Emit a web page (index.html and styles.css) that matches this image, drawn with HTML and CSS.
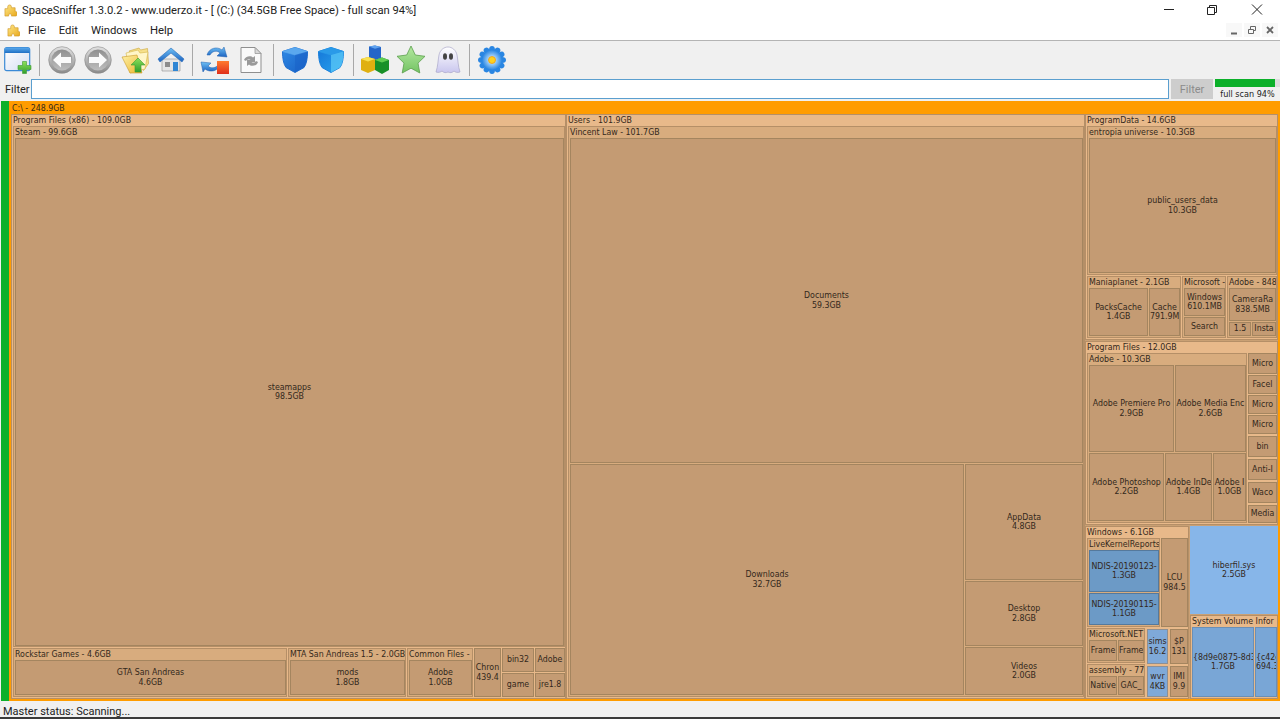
FILE: index.html
```html
<!DOCTYPE html>
<html lang="en">
<head>
  <meta charset="UTF-8">
  <title>SpaceSniffer</title>
  <link rel="stylesheet" href="styles.css">
</head>
<body>
  <svg class="defs" width="0" height="0">
    <defs>
      <linearGradient id="g-puzzle" x1="0" y1="0" x2="1" y2="1"><stop offset="0" stop-color="#ffe98a"/><stop offset="1" stop-color="#e8a81c"/></linearGradient>
      <linearGradient id="g-gray" x1="0" y1="0" x2="0" y2="1"><stop offset="0" stop-color="#e2e2e2"/><stop offset="1" stop-color="#8a8a8a"/></linearGradient>
      <linearGradient id="g-disc" x1="0" y1="0" x2="0" y2="1"><stop offset="0" stop-color="#8f8f8f"/><stop offset="1" stop-color="#bdbdbd"/></linearGradient>
      <linearGradient id="g-band" x1="0" y1="0" x2="0" y2="1"><stop offset="0" stop-color="#5aa9ec"/><stop offset="1" stop-color="#1f6fc4"/></linearGradient>
      <linearGradient id="g-page" x1="0" y1="0" x2="1" y2="1"><stop offset="0" stop-color="#ffffff"/><stop offset="1" stop-color="#d5def2"/></linearGradient>
      <linearGradient id="g-green" x1="0" y1="0" x2="0" y2="1"><stop offset="0" stop-color="#8fe05a"/><stop offset="1" stop-color="#2f9e2c"/></linearGradient>
      <linearGradient id="g-folder" x1="0" y1="0" x2="1" y2="1"><stop offset="0" stop-color="#fff2a8"/><stop offset="1" stop-color="#eab42a"/></linearGradient>
      <linearGradient id="g-blue" x1="0" y1="0" x2="0" y2="1"><stop offset="0" stop-color="#6fc0f5"/><stop offset="1" stop-color="#1b62c0"/></linearGradient>
      <linearGradient id="g-red" x1="0" y1="0" x2="0" y2="1"><stop offset="0" stop-color="#ff7a30"/><stop offset="1" stop-color="#e0301c"/></linearGradient>
      <linearGradient id="g-star" x1="0" y1="0" x2="0" y2="1"><stop offset="0" stop-color="#b4e8a0"/><stop offset="1" stop-color="#74c464"/></linearGradient>
      <linearGradient id="g-ghost" x1="0" y1="0" x2="0" y2="1"><stop offset="0" stop-color="#ffffff"/><stop offset="1" stop-color="#c9c6ee"/></linearGradient>
      <linearGradient id="g-cube-a" x1="0" y1="0" x2="1" y2="1"><stop offset="0" stop-color="#2f8ae6"/><stop offset="1" stop-color="#1860c4"/></linearGradient>
      <linearGradient id="g-cube-b" x1="0" y1="0" x2="1" y2="1"><stop offset="0" stop-color="#1576d8"/><stop offset="1" stop-color="#2aa4ee"/></linearGradient>
      <radialGradient id="g-petal"><stop offset=".35" stop-color="#a8d4fa"/><stop offset="1" stop-color="#2a86e2"/></radialGradient>
    </defs>
  </svg>

  <div class="titlebar">
    <svg class="app-icon" viewBox="0 0 14 14"><path d="M1 5h3V3q0-2 2-2t2 2v1h4v4h1q1 0 1 2.500T13 13H8v-1q0-1.500-1.500-1.500T5 12v1H1z" fill="url(#g-puzzle)" stroke="#c98f1c" stroke-width=".6"/></svg>
    <span class="title">SpaceSniffer 1.3.0.2 - www.uderzo.it - [ (C:) (34.5GB Free Space) - full scan 94%]</span>
    <div class="winbtns">
      <svg viewBox="0 0 46 20"><path d="M18 9.500h10" stroke="#222" fill="none"/></svg>
      <svg viewBox="0 0 46 20"><path d="M17.500 7.500h7v7h-7zM19.500 7.500v-2h7v7h-2" stroke="#222" fill="none"/></svg>
      <svg viewBox="0 0 46 20"><path d="M18 4.500l10 10M28 4.500l-10 10" stroke="#222" fill="none"/></svg>
    </div>
  </div>

  <div class="menubar">
    <svg class="app-icon" viewBox="0 0 14 14"><path d="M1 5h3V3q0-2 2-2t2 2v1h4v4h1q1 0 1 2.500T13 13H8v-1q0-1.500-1.500-1.500T5 12v1H1z" fill="url(#g-puzzle)" stroke="#c98f1c" stroke-width=".6"/></svg>
    <span class="menu">File</span>
    <span class="menu">Edit</span>
    <span class="menu">Windows</span>
    <span class="menu">Help</span>
    <div class="mdibtns">
      <svg viewBox="0 0 16 14"><path d="M5 10.500h6" stroke="#666" stroke-width="2" fill="none"/></svg>
      <svg viewBox="0 0 16 14"><path d="M4.500 6.500h5v4h-5zM6.500 6V3.500h5v4H10" stroke="#666" fill="none"/></svg>
      <svg viewBox="0 0 16 14"><path d="M5 4l6 6M11 4l-6 6" stroke="#666" stroke-width="1.800" fill="none"/></svg>
    </div>
  </div>

  <div class="toolbar">
    <svg class="tool" viewBox="0 0 28 28">
      <rect x=".7" y="1.700" width="25" height="23" rx="2" fill="url(#g-page)" stroke="#3b8ad6" stroke-width="1.200"/>
      <path d="M.7 3.700a2 2 0 0 1 2-2h21a2 2 0 0 1 2 2v3.300h-25z" fill="url(#g-band)"/>
      <path d="M18.500 15.500h4v4h4.500v4h-4.500v4h-4v-4H14v-4h4.500z" fill="url(#g-green)" stroke="#3c9a32" stroke-width=".6"/>
    </svg>
    <i class="sep"></i>
    <svg class="tool" viewBox="0 0 28 28">
      <circle cx="14" cy="14" r="13.300" fill="url(#g-gray)" stroke="#8a8a8a" stroke-width=".6"/>
      <circle cx="14" cy="14" r="10.500" fill="url(#g-disc)"/>
      <path d="M5 14l8-7.500v4.500h10v6H13v4.500z" fill="#fafafa"/>
    </svg>
    <svg class="tool" viewBox="0 0 28 28">
      <circle cx="14" cy="14" r="13.300" fill="url(#g-gray)" stroke="#8a8a8a" stroke-width=".6"/>
      <circle cx="14" cy="14" r="10.500" fill="url(#g-disc)"/>
      <path d="M23 14l-8-7.500v4.500H5v6h10v4.500z" fill="#fafafa"/>
    </svg>
    <svg class="tool" viewBox="0 0 28 28">
      <path d="M8 5l10-3 1.500 2 7-1.500 1 15-5 7z" fill="#f6e08a" stroke="#c9a53a" stroke-width=".6"/>
      <path d="M5 7l12-3 2 3 8-1-3 17-15 4z" fill="#fff6c8" stroke="#d5b64a" stroke-width=".6"/>
      <path d="M1 11l15-2 5 18H9z" fill="url(#g-folder)" stroke="#c9982a" stroke-width=".6"/>
      <path d="M17 12l7 7h-4v7h-6v-7h-4z" fill="url(#g-green)" stroke="#3c9a32" stroke-width=".6"/>
    </svg>
    <svg class="tool" viewBox="0 0 28 28">
      <path d="M5 13h18v12H5z" fill="#e6e6e6" stroke="#8e8e8e" stroke-width=".6"/>
      <path d="M14 2L1 13l2 3L14 7l11 9 2-3z" fill="url(#g-blue)" stroke="#2a6cb8" stroke-width=".6"/>
      <path d="M8 16h5v5H8z" fill="#8c8c8c"/>
      <path d="M16 16h5v9h-5z" fill="#2f86d4"/>
    </svg>
    <i class="sep"></i>
    <svg class="tool wide" viewBox="0 0 30 30">
      <path d="M7 10C9 3 17 1 22 5l2-3 3 10-10-1 3-3c-3-3-8-2-10 2z" fill="url(#g-blue)" stroke="#1f5fae" stroke-width=".5"/>
      <path d="M20 20c-2 6-10 8-15 4l-2 3-2-10 10 1-3 3c3 3 8 2 10-1z" fill="url(#g-blue)" stroke="#1f5fae" stroke-width=".5"/>
      <rect x="17" y="16" width="12" height="13" fill="url(#g-red)"/>
    </svg>
    <svg class="tool" viewBox="0 0 28 28">
      <path d="M4 1.500h14l6 6v19H4z" fill="#fafafa" stroke="#8f8f8f"/>
      <path d="M18 1.500v6h6z" fill="#d8d8d8" stroke="#8f8f8f" stroke-width=".7"/>
      <path d="M7 14c1-4 7-5 9-2.500l2-1.500v6h-6l2-1.500c-1-1.500-4-1.500-5 .5z" fill="#9a9a9a"/>
      <path d="M21 16c-1 4-7 5-9 2.500l-2 1.500v-6h6l-2 1.500c1 1.500 4 1.500 5-.5z" fill="#9a9a9a"/>
    </svg>
    <i class="sep"></i>
    <svg class="tool" viewBox="0 0 28 28">
      <path d="M1.500 5.500L14 1.500l12.500 4c0 7-1 12.500-3.500 16L14 26.500 5 21.500C2.500 18 1.500 12.500 1.500 5.500z" fill="url(#g-cube-a)" stroke="#1f6fd0" stroke-linejoin="round"/>
      <path d="M1.500 5.500L14 1.500l12.500 4L14 9z" fill="#5aa8ee" stroke="#5aa8ee" stroke-width=".6" stroke-linejoin="round"/>
      <path d="M14 9l12.500-3.500c0 7-1 12.500-3.500 16L14 26.500z" fill="#1a62c8" opacity=".55"/>
    </svg>
    <svg class="tool" viewBox="0 0 28 28">
      <path d="M1.500 5.500L14 1.500l12.500 4c0 7-1 12.500-3.500 16L14 26.500 5 21.500C2.500 18 1.500 12.500 1.500 5.500z" fill="url(#g-cube-b)" stroke="#1a80dc" stroke-linejoin="round"/>
      <path d="M1.500 5.500L14 1.500l12.500 4L14 9z" fill="#2a9ae8" stroke="#2a9ae8" stroke-width=".6" stroke-linejoin="round"/>
      <path d="M14 9l12.500-3.500c0 7-1 12.500-3.500 16L14 26.500z" fill="#5ccaf8" opacity=".7"/>
    </svg>
    <i class="sep"></i>
    <svg class="tool wide" viewBox="0 0 30 30">
      <path d="M9 1.500l6-1 6 1.500v11l-6 2-6-2z" fill="#2566c8"/>
      <path d="M9 1.500l6-1 6 1.500-6 1.800z" fill="#5fa2ee"/>
      <path d="M1 14l7-2 7 2v11l-7 3-7-3z" fill="#e0b010"/>
      <path d="M1 14l7-2 7 2-7 2.500z" fill="#f8e050"/>
      <path d="M15 15l7-2.500 7 2.500v10l-7 4-7-4z" fill="#189028"/>
      <path d="M15 15l7-2.500 7 2.500-7 2.500z" fill="#60cc50"/>
    </svg>
    <svg class="tool wide" viewBox="0 0 30 30">
      <path d="M15 1l4.300 9 9.700 1.300-7 6.800 1.800 9.900-8.800-4.800L6.200 28 8 18.100 1 11.300 10.700 10z" fill="url(#g-star)" stroke="#5a9e4c" stroke-width=".8"/>
    </svg>
    <svg class="tool" viewBox="0 0 28 28">
      <path d="M2 26C4 20 4 14 5 9c1-5 5-8 9-8s8 3 9 8c1 5 1 11 3 17-3 1-5 0-6-1-2 2-4 2-6 1-2 1-4 1-6-1-1 1-4 2-6 1z" fill="url(#g-ghost)" stroke="#a9a6c9" stroke-width=".7"/>
      <ellipse cx="11" cy="10.500" rx="2" ry="3.300" fill="#444"/>
      <ellipse cx="17" cy="10.500" rx="2" ry="3.300" fill="#444"/>
    </svg>
    <i class="sep"></i>
    <svg class="tool" viewBox="0 0 28 28">
      <g fill="#2a86e2">
        <ellipse cx="14" cy="4" rx="3" ry="4"/>
        <ellipse cx="14" cy="4" rx="3" ry="4" transform="rotate(30 14 14)"/>
        <ellipse cx="14" cy="4" rx="3" ry="4" transform="rotate(60 14 14)"/>
        <ellipse cx="14" cy="4" rx="3" ry="4" transform="rotate(90 14 14)"/>
        <ellipse cx="14" cy="4" rx="3" ry="4" transform="rotate(120 14 14)"/>
        <ellipse cx="14" cy="4" rx="3" ry="4" transform="rotate(150 14 14)"/>
        <ellipse cx="14" cy="4" rx="3" ry="4" transform="rotate(180 14 14)"/>
        <ellipse cx="14" cy="4" rx="3" ry="4" transform="rotate(210 14 14)"/>
        <ellipse cx="14" cy="4" rx="3" ry="4" transform="rotate(240 14 14)"/>
        <ellipse cx="14" cy="4" rx="3" ry="4" transform="rotate(270 14 14)"/>
        <ellipse cx="14" cy="4" rx="3" ry="4" transform="rotate(300 14 14)"/>
        <ellipse cx="14" cy="4" rx="3" ry="4" transform="rotate(330 14 14)"/>
      </g>
      <circle cx="14" cy="14" r="10" fill="url(#g-petal)"/>
      <circle cx="14" cy="14" r="3.500" fill="#ffd21e" stroke="#f09a10" stroke-width=".8"/>
    </svg>
  </div>

  <div class="filterbar">
    <label class="filter-label" for="filter">Filter</label>
    <input class="filter-input" id="filter" type="text">
    <button class="filter-btn" type="button">Filter</button>
    <div class="scan">
      <div class="scan-track"><div class="scan-fill"></div></div>
      <div class="scan-text">full scan 94%</div>
    </div>
  </div>

  <div class="map">
    <div class="scanbar"></div>
    <div class="dir root">
      <div class="head">C:\ - 248.9GB</div>
      <div class="kids row">

        <div class="dir l1" style="flex:0 0 555px">
          <div class="head">Program Files (x86) - 109.0GB</div>
          <div class="kids col">
            <div class="dir l2" style="flex:0 0 521px">
              <div class="head">Steam - 99.6GB</div>
              <div class="kids flush col">
                <div class="leaf"><p>steamapps<br>98.5GB</p></div>
              </div>
            </div>
            <div class="row">
              <div class="dir l2" style="flex:0 0 274px">
                <div class="head">Rockstar Games - 4.6GB</div>
                <div class="kids col"><div class="leaf"><p>GTA San Andreas<br>4.6GB</p></div></div>
              </div>
              <div class="dir l2" style="flex:0 0 118px">
                <div class="head">MTA San Andreas 1.5 - 2.0GB</div>
                <div class="kids col"><div class="leaf"><p>mods<br>1.8GB</p></div></div>
              </div>
              <div class="dir l2" style="flex:0 0 66px">
                <div class="head">Common Files -</div>
                <div class="kids col"><div class="leaf"><p>Adobe<br>1.0GB</p></div></div>
              </div>
              <div class="leaf" style="flex:0 0 27px"><p>Chron<br>439.4</p></div>
              <div class="col" style="flex:0 0 32px">
                <div class="leaf"><p>bin32</p></div>
                <div class="leaf"><p>game</p></div>
              </div>
              <div class="col">
                <div class="leaf"><p>Adobe</p></div>
                <div class="leaf"><p>jre1.8</p></div>
              </div>
            </div>
          </div>
        </div>

        <div class="dir l1" style="flex:0 0 519px">
          <div class="head">Users - 101.9GB</div>
          <div class="kids col">
            <div class="dir l2">
              <div class="head">Vincent Law - 101.7GB</div>
              <div class="kids col">
                <div class="leaf" style="flex:0 0 325px"><p>Documents<br>59.3GB</p></div>
                <div class="row">
                  <div class="leaf" style="flex:0 0 394px"><p>Downloads<br>32.7GB</p></div>
                  <div class="col">
                    <div class="leaf" style="flex:0 0 116px"><p>AppData<br>4.8GB</p></div>
                    <div class="leaf" style="flex:0 0 65px"><p>Desktop<br>2.8GB</p></div>
                    <div class="leaf"><p>Videos<br>2.0GB</p></div>
                  </div>
                </div>
              </div>
            </div>
          </div>
        </div>

        <div class="col stack">
          <div class="dir l1" style="flex:0 0 226px">
            <div class="head">ProgramData - 14.6GB</div>
            <div class="kids col">
              <div class="dir l2" style="flex:0 0 149px">
                <div class="head">entropia universe - 10.3GB</div>
                <div class="kids col"><div class="leaf"><p>public_users_data<br>10.3GB</p></div></div>
              </div>
              <div class="row">
                <div class="dir l2" style="flex:0 0 94px">
                  <div class="head">Maniaplanet - 2.1GB</div>
                  <div class="kids row">
                    <div class="leaf" style="flex:0 0 59px"><p>PacksCache<br>1.4GB</p></div>
                    <div class="leaf"><p>Cache<br>791.9M</p></div>
                  </div>
                </div>
                <div class="dir l2" style="flex:0 0 44px">
                  <div class="head">Microsoft -</div>
                  <div class="kids col">
                    <div class="leaf" style="flex:0 0 28px"><p>Windows<br>610.1MB</p></div>
                    <div class="leaf"><p>Search</p></div>
                  </div>
                </div>
                <div class="dir l2">
                  <div class="head">Adobe - 848</div>
                  <div class="kids col">
                    <div class="leaf" style="flex:0 0 33px"><p>CameraRa<br>838.5MB</p></div>
                    <div class="row">
                      <div class="leaf" style="flex:0 0 22px"><p>1.5</p></div>
                      <div class="leaf"><p>Insta</p></div>
                    </div>
                  </div>
                </div>
              </div>
            </div>
          </div>

          <div class="dir l1" style="flex:0 0 184px">
            <div class="head">Program Files - 12.0GB</div>
            <div class="kids row">
              <div class="dir l2" style="flex:0 0 160px">
                <div class="head">Adobe - 10.3GB</div>
                <div class="kids col">
                  <div class="row" style="flex:0 0 87px">
                    <div class="leaf" style="flex:0 0 85px"><p>Adobe Premiere Pro<br>2.9GB</p></div>
                    <div class="leaf"><p>Adobe Media Enc<br>2.6GB</p></div>
                  </div>
                  <div class="row">
                    <div class="leaf" style="flex:0 0 75px"><p>Adobe Photoshop<br>2.2GB</p></div>
                    <div class="leaf" style="flex:0 0 47px"><p>Adobe InDe<br>1.4GB</p></div>
                    <div class="leaf"><p>Adobe I<br>1.0GB</p></div>
                  </div>
                </div>
              </div>
              <div class="col">
                <div class="leaf" style="flex:0 0 21px"><p>Micro</p></div>
                <div class="leaf" style="flex:0 0 19px"><p>Facel</p></div>
                <div class="leaf" style="flex:0 0 19px"><p>Micro</p></div>
                <div class="leaf" style="flex:0 0 19px"><p>Micro</p></div>
                <div class="leaf apart" style="flex:0 0 21px"><p>bin</p></div>
                <div class="leaf apart" style="flex:0 0 21px"><p>Anti-I</p></div>
                <div class="leaf apart" style="flex:0 0 21px"><p>Waco</p></div>
                <div class="leaf apart"><p>Media</p></div>
              </div>
            </div>
          </div>

          <div class="row">
            <div class="dir l1" style="flex:0 0 104px">
              <div class="head">Windows - 6.1GB</div>
              <div class="kids col">
                <div class="row" style="flex:0 0 89px">
                  <div class="dir l2" style="flex:0 0 73px">
                    <div class="head">LiveKernelReports</div>
                    <div class="kids col">
                      <div class="leaf dark" style="flex:0 0 42px"><p>NDIS-20190123-<br>1.3GB</p></div>
                      <div class="leaf dark"><p>NDIS-20190115-<br>1.1GB</p></div>
                    </div>
                  </div>
                  <div class="leaf"><p>LCU<br>984.5</p></div>
                </div>
                <div class="row">
                  <div class="col" style="flex:0 0 58px">
                    <div class="dir l2" style="flex:0 0 35px">
                      <div class="head">Microsoft.NET</div>
                      <div class="kids row">
                        <div class="leaf" style="flex:0 0 28px"><p>Frame</p></div>
                        <div class="leaf"><p>Frame</p></div>
                      </div>
                    </div>
                    <div class="dir l2">
                      <div class="head">assembly - 770</div>
                      <div class="kids row">
                        <div class="leaf" style="flex:0 0 28px"><p>Native</p></div>
                        <div class="leaf"><p>GAC_</p></div>
                      </div>
                    </div>
                  </div>
                  <div class="grid-files">
                    <div class="leaf blue"><p>sims<br>16.2</p></div>
                    <div class="leaf"><p>$P<br>131</p></div>
                    <div class="leaf blue"><p>wvr<br>4KB</p></div>
                    <div class="leaf"><p>IMI<br>9.9</p></div>
                  </div>
                </div>
              </div>
            </div>
            <div class="col">
              <div class="leaf sky" style="flex:0 0 88px"><p>hiberfil.sys<br>2.5GB</p></div>
              <div class="dir l1">
                <div class="head">System Volume Infor</div>
                <div class="kids row">
                  <div class="leaf sky-dim" style="flex:0 0 62px"><p>{8d9e0875-8d3<br>1.7GB</p></div>
                  <div class="leaf sky-dim"><p>{c42c<br>694.3</p></div>
                </div>
              </div>
            </div>
          </div>
        </div>

      </div>
    </div>
  </div>

  <div class="statusbar">Master status: Scanning...</div>
</body>
</html>
```

FILE: styles.css
```css
* {
  box-sizing: border-box;
}

body {
  margin: 0;
  height: 719px;
  overflow: hidden;
  display: flex;
  flex-direction: column;
  background-color: #f0f0f0;
  font-family: Roboto, sans-serif;
  color: #222;
}

.defs {
  position: absolute;
}

/* window chrome */
.titlebar {
  flex: 0 0 20px;
  display: flex;
  align-items: center;
  background-color: #fff;
  padding-left: 4px;
  font-size: 11.200px;
}

.app-icon {
  width: 13px;
  height: 13px;
  flex: none;
}

.title {
  margin-left: 5px;
  white-space: nowrap;
}

.winbtns {
  margin-left: auto;
  display: flex;
  height: 20px;
}

.winbtns svg {
  width: 46px;
  height: 20px;
  margin-left: -2px;
}

.menubar {
  flex: 0 0 21px;
  display: flex;
  align-items: center;
  gap: 13px;
  padding-left: 7px;
  background-color: #fff;
  border-bottom: 1px solid #b4b4b4;
  font-size: 11.300px;
}

.menu:first-of-type {
  margin-left: -5px;
}

.mdibtns {
  margin-left: auto;
  margin-right: 2px;
  display: flex;
  gap: 2px;
}

.mdibtns svg {
  width: 16px;
  height: 14px;
  background-color: #f8f8f8;
}

/* toolbar */
.toolbar {
  flex: 0 0 38px;
  display: flex;
  align-items: center;
  gap: 8.400px;
  padding-left: 4px;
}

.tool {
  width: 28px;
  height: 28px;
  flex: none;
}

.tool.wide {
  width: 30px;
  height: 30px;
  margin: 0 -1px;
}

.sep {
  width: 1px;
  height: 32px;
  margin: 0 -1px;
  background-color: #a8a8a8;
}

/* filter row */
.filterbar {
  flex: 0 0 21px;
  display: flex;
  align-items: center;
  padding-bottom: 1px;
}

.filter-label {
  width: 31px;
  padding-left: 5px;
  font-size: 11px;
}

.filter-input {
  width: 1138px;
  height: 20px;
  border: 1px solid #5b9fcf;
  background-color: #fff;
  padding: 0 3px;
}

.filter-btn {
  width: 42px;
  height: 20px;
  margin-left: 2px;
  border: none;
  background-color: #cdcdcd;
  color: #8b8b8b;
  font-family: inherit;
  font-size: 11px;
  padding: 0;
}

.scan {
  margin-left: 2px;
  flex: 1;
  font-family: "DejaVu Sans Condensed", "Liberation Sans", sans-serif;
  font-size: 9px;
  height: 20px;
}

.scan-track {
  height: 8px;
  background-color: #dcdcdc;
}

.scan-fill {
  width: 60px;
  height: 8px;
  background-color: #0cb02a;
}

.scan-text {
  padding-top: 2px;
  text-align: center;
  line-height: 11px;
  white-space: nowrap;
}

/* treemap */
.map {
  flex: 0 0 601px;
  display: flex;
  padding: 1px 0 0 1px;
  background-color: #f0f0f0;
}

.scanbar {
  flex: 0 0 8px;
  background-color: #0cb02a;
}

.dir,
.leaf,
.row,
.col {
  flex: 1 1 0;
  min-width: 0;
  min-height: 0;
}

.row {
  display: flex;
  gap: 1px;
}

.col {
  display: flex;
  flex-direction: column;
  gap: 1px;
}

.stack {
  background-color: #c9a074;
}

.dir {
  display: flex;
  flex-direction: column;
  border: 1px solid #b58f67;
  font-family: "DejaVu Sans Condensed", "Liberation Sans", sans-serif;
  font-size: 8.750px;
  color: #33281b;
}

.head {
  flex: 0 0 11px;
  line-height: 11px;
  padding-left: 1px;
  white-space: nowrap;
  overflow: hidden;
}

.kids {
  padding: 0 0 1px 1px;
}

.kids.flush {
  padding-bottom: 0;
}

.root {
  flex: 1;
  border: none;
  padding: 1px 2px 2px;
  background-color: #ff9c00;
}

.root > .head {
  flex: 0 0 12px;
  padding-top: 1px;
}

.root > .kids {
  padding: 0;
  gap: 0;
}

.l1 {
  background-color: #e8b98a;
}

.l2 {
  background-color: #d8ac7e;
}

.leaf {
  display: flex;
  align-items: center;
  overflow: hidden;
  border: 1px solid #a4855f;
  background-color: #c49b73;
  font-family: "DejaVu Sans Condensed", "Liberation Sans", sans-serif;
  font-size: 8.750px;
  line-height: 9.500px;
  color: #33281b;
}

.leaf p {
  margin: 0;
  width: 100%;
  text-align: center;
  white-space: nowrap;
}

.leaf.apart {
  margin-top: 1px;
}

.leaf.dark {
  background-color: #6c9ac6;
  border-color: #55799c;
}

.leaf.blue {
  background-color: #7fa9d8;
  border-color: #8e8f92;
}

.leaf.sky {
  background-color: #87b6e9;
  border-color: #87b6e9;
}

.leaf.sky-dim {
  background-color: #79a6d6;
  border-color: #6a8fb6;
}

.grid-files {
  flex: 1 1 0;
  display: grid;
  grid-template-columns: 21px 1fr;
  grid-template-rows: 35px 1fr;
  gap: 2px;
  padding: 1px 0 0 1px;
}

.statusbar {
  flex: 1;
  padding-left: 3px;
  font-size: 11px;
  line-height: 21px;
  border-bottom: 2px solid #3a3a3a;
  overflow: hidden;
  white-space: nowrap;
}
```
